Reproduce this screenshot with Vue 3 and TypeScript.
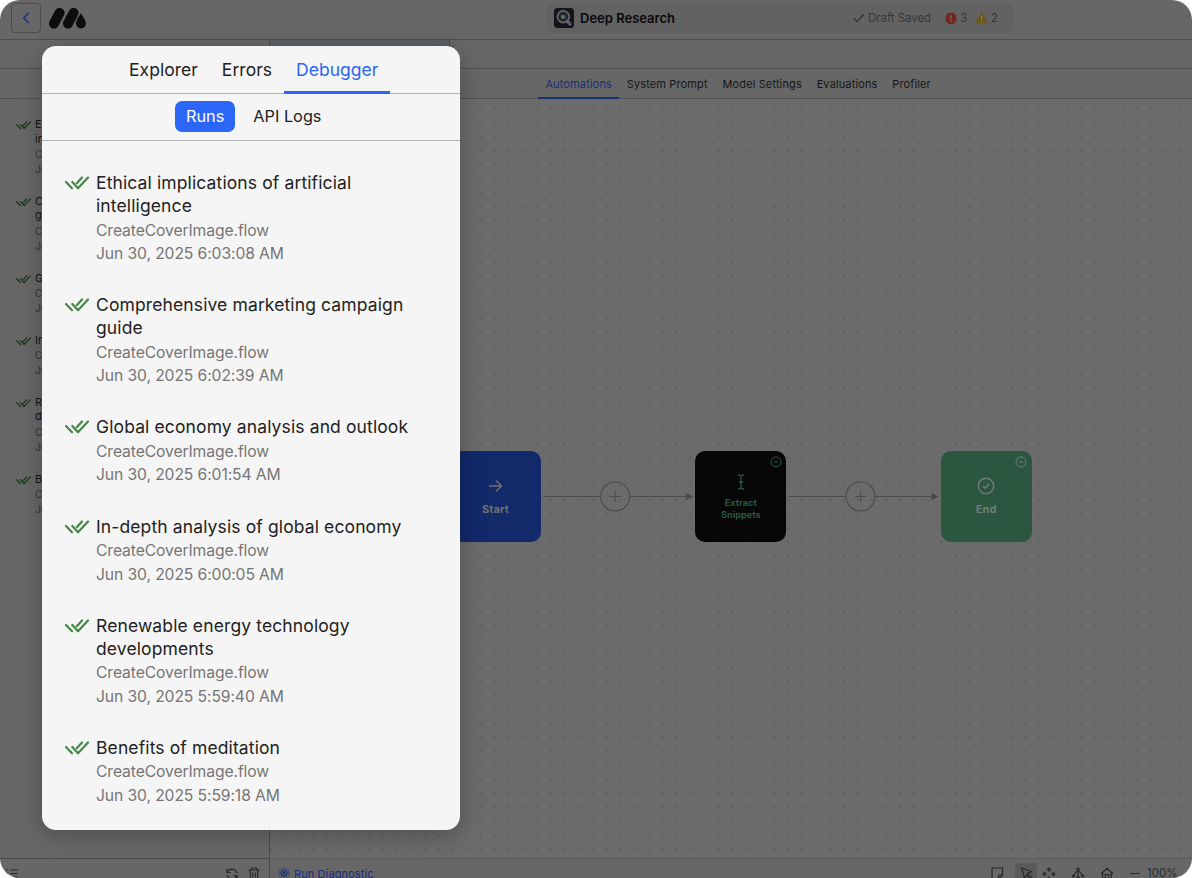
<script setup lang="ts">
interface Run { lines: string[]; time: string }

const runs: Run[] = [
  { lines: ['Ethical implications of artificial', 'intelligence'], time: '6:03:08' },
  { lines: ['Comprehensive marketing campaign', 'guide'], time: '6:02:39' },
  { lines: ['Global economy analysis and outlook'], time: '6:01:54' },
  { lines: ['In-depth analysis of global economy'], time: '6:00:05' },
  { lines: ['Renewable energy technology', 'developments'], time: '5:59:40' },
  { lines: ['Benefits of meditation'], time: '5:59:18' },
]
const tabs: string[] = ['Automations', 'System Prompt', 'Model Settings', 'Evaluations', 'Profiler']
</script>

<template>
  <div class="window">
    <header class="topbar">
      <div class="back">
        <svg width="30" height="30" viewBox="0 0 30 30"><path d="M17.8 9.800 12.700 15l5.100 5.200" fill="none" stroke="#1b3280" stroke-width="1.5" /></svg>
      </div>
      <svg class="logo" width="40" height="24" viewBox="0 0 40 24">
        <path d="M5.900 17.600 11.600 6.800M19.900 17.600 25.600 6.800" stroke="#0d0d0d" stroke-width="10" stroke-linecap="round" />
        <path d="M32.900 7.200c1.500 2.800 5 6.500 5 10.400a4.900 4.900 0 0 1-9.900 0c0-3.800 3.300-7.500 4.900-10.400Z" fill="#0d0d0d" />
      </svg>
      <div class="project">
        <svg width="20" height="20" viewBox="0 0 20 20">
          <rect width="20" height="20" rx="3.500" fill="#151517" />
          <circle cx="9.300" cy="8.800" r="5.900" fill="#202827" stroke="#69657a" stroke-width="1.700" />
          <path d="M7 7.500 9 6.500l2.500 1.500-.4 2.500-2.600.8L7 9.500Z" fill="#49685f" />
          <circle cx="8.500" cy="9" r=".8" fill="#8b8c94" />
          <path d="m13.500 13.200 2.500 2.800" stroke="#69657a" stroke-width="3.200" stroke-linecap="round" />
          <path d="m14.700 14.900 1 1" stroke="#383456" stroke-width="1" />
        </svg>
        <strong>Deep Research</strong>
        <span class="saved">
          <svg width="12" height="10" viewBox="0 0 12 10"><path d="m1 5.300 3.100 3.100L10.800 1.500" fill="none" stroke="#303030" stroke-width="1.200" /></svg>
          Draft Saved
        </span>
        <span class="count errors">
          <svg width="12" height="13" viewBox="0 0 12 13"><path d="m3.600.8 4.800 0 3 3v5.200l-3 3H3.600l-3-3V3.800Z" fill="#702820" /><path d="M6 3.300v3.700M6 8.600v1.200" stroke="#777" stroke-width="1.200" /></svg>
          3
        </span>
        <span class="count">
          <svg width="13" height="12" viewBox="0 0 13 12"><path d="M6.500 1.300 11.700 10.600H1.300Z" fill="#6d5718" stroke="#6d5718" stroke-width="1.400" stroke-linejoin="round" /><path d="M6.500 4v3.300M6.500 8.500v1.200" stroke="#888" stroke-width="1.100" /></svg>
          2
        </span>
      </div>
    </header>

    <div class="workspace">
      <aside class="sidebar">
        <div class="side-row"></div>
        <div class="side-row second"></div>
        <div class="run-list small">
          <article v-for="run in runs" :key="run.time" class="run">
            <svg class="check" viewBox="0 0 24 15"><path d="m1 7 6 6.200M7.300 7l5.700 6.200L23 2.500M11.800 8.200 17 2.500" fill="none" stroke="currentColor" stroke-width="2.200" stroke-linecap="round" stroke-linejoin="round" /></svg>
            <div>
              <h3><span v-for="line in run.lines" :key="line">{{ line }}</span></h3>
              <p>CreateCoverImage.flow</p>
              <p class="date">Jun 30, 2025 {{ run.time }} AM</p>
            </div>
          </article>
        </div>
        <footer class="side-footer">
          <svg class="list-icon" width="13" height="10" viewBox="0 0 13 10"><path d="M4 1h8M4 4.500h8M4 8h8M0 1h2M0 4.500h2M0 8h2" stroke="#292929" stroke-width="1.200" /></svg>
          <svg class="refresh" width="14" height="14" viewBox="0 0 14 14"><path d="M2 2v3.500h3.500M2.300 5.200a5 5 0 0 1 9.500.9M12 12V8.500H8.500M11.700 8.800A5 5 0 0 1 2.200 7.900" fill="none" stroke="#292929" stroke-width="1.100" /></svg>
          <svg width="12" height="14" viewBox="0 0 12 14"><path d="M.5 3h11M3.500 3V1h5v2M2 3l.6 9.500h6.800L10 3M4.700 5.500v5M7.300 5.500v5" fill="none" stroke="#292929" stroke-width="1.100" /></svg>
        </footer>
      </aside>

      <main class="main">
        <div class="file-row"><div class="file-tab"></div></div>
        <nav class="main-tabs">
          <span v-for="(tab, i) in tabs" :key="tab" :class="{ active: i === 0 }">{{ tab }}</span>
        </nav>
        <section class="canvas">
          <svg class="links" width="922" height="760" viewBox="270 99 922 760">
            <g stroke="#4b4b4b" stroke-width="1.100" fill="none">
              <path d="M543 496.500h57.500M630 496.500h58M788.500 496.500H846M875 496.500h58" />
              <circle cx="615.200" cy="496.500" r="14.500" /><circle cx="860.500" cy="496.500" r="14.500" />
              <path d="M609.700 496.500h11M615.200 491v11M855 496.500h11M860.500 491v11" />
            </g>
            <path d="m685.300 492.700 8 3.800-8 3.800 1.500-3.800ZM930.700 492.700l8 3.800-8 3.800 1.500-3.800Z" fill="#484848" />
          </svg>
          <div class="node start">
            <svg width="16" height="14" viewBox="0 0 16 14"><path d="M1 7h12.500M8 1.500 13.500 7 8 12.500" fill="none" stroke="currentColor" stroke-width="1.500" /></svg>
            <b>Start</b>
          </div>
          <div class="node extract">
            <svg class="minus" width="12" height="12" viewBox="0 0 12 12"><circle cx="6" cy="6" r="5" /><path d="M4 6h4" /></svg>
            <svg width="8" height="16" viewBox="0 0 8 16"><path d="M1 1h1l2 1 2-1h1M4 2v12M1 15h1l2-1 2 1h1M2 8h4" fill="none" stroke="currentColor" stroke-width="1.300" /></svg>
            <b>Extract<br>Snippets</b>
          </div>
          <div class="node end">
            <svg class="minus" width="12" height="12" viewBox="0 0 12 12"><circle cx="6" cy="6" r="5" /><path d="M4 6h4" /></svg>
            <svg width="18" height="18" viewBox="0 0 18 18"><g fill="none" stroke="currentColor" stroke-width="1.400"><circle cx="9" cy="9" r="7.700" /><path d="m6 9 2.300 2.200L12.200 7" /></g></svg>
            <b>End</b>
          </div>
        </section>
        <footer class="toolbar">
          <svg class="diag-icon" width="12" height="12" viewBox="0 0 12 12"><g fill="none" stroke="#172f77"><circle cx="6" cy="6" r="5.200" stroke-dasharray="1 1.040" /><circle cx="6" cy="6" r="3" stroke-width="1.100" /></g><circle cx="6" cy="6" r="1.400" fill="#172f77" /></svg>
          <span class="diag">Run Diagnostic</span>
          <div class="tools">
            <span class="tool note"><svg width="13" height="13" viewBox="0 0 13 13"><path d="M1 1h10.500v7L8 11.500H1ZM7.500 12V8h4" /></svg></span>
            <span class="tool pointer"><svg width="13" height="13" viewBox="0 0 13 13"><path d="m1.500 1 10 3.800-4 1.700 4 4-1.200 1.200-4-4-1.600 4Z" /></svg></span>
            <span class="tool move"><svg width="14" height="14" viewBox="0 0 14 14"><path d="M7 5V1.500M5 3.200l2-2 2 2M7 9v3.500M5 10.800l2 2 2-2M5 7H1.500M3.200 5l-2 2 2 2M9 7h3.500M10.800 5l2 2-2 2" /></svg></span>
            <span class="tool layout"><svg width="14" height="13" viewBox="0 0 14 13"><path d="M7 3v8M6.300 3.500 2.500 8.500M7.700 3.500l3.800 5" /><circle cx="7" cy="2" r="1" /><circle cx="2.300" cy="9" r="1" /><circle cx="7" cy="10.500" r="1" /><circle cx="11.700" cy="9" r="1" /></svg></span>
            <span class="tool home"><svg width="14" height="13" viewBox="0 0 14 13"><path d="m1 6.700 6-5.500 6 5.500M2.700 5.500V12h8.600V5.500M5.300 12V7.500h3.400V12" /></svg></span>
            <span class="zoom-minus"></span>
            <span class="zoom">100%</span>
          </div>
        </footer>
      </main>
    </div>

    <section class="panel">
      <nav class="panel-tabs"><span>Explorer</span><span>Errors</span><span class="active">Debugger</span></nav>
      <nav class="subtabs"><span class="active">Runs</span><span>API Logs</span></nav>
      <div class="run-list">
        <article v-for="run in runs" :key="run.time" class="run">
          <svg class="check" viewBox="0 0 24 15"><path d="m1 7 6 6.200M7.300 7l5.700 6.200L23 2.500M11.800 8.200 17 2.500" fill="none" stroke="currentColor" stroke-width="2.200" stroke-linecap="round" stroke-linejoin="round" /></svg>
          <div>
            <h3><span v-for="line in run.lines" :key="line">{{ line }}</span></h3>
            <p>CreateCoverImage.flow</p>
            <p class="date">Jun 30, 2025 {{ run.time }} AM</p>
          </div>
        </article>
      </div>
    </section>
  </div>
</template>

<style>
html, body { margin: 0; background: #fff; overflow: hidden; }
</style>

<style scoped>
* { box-sizing: border-box; }
.window { position: relative; width: 1192px; height: 878px; display: flex; flex-direction: column; overflow: hidden; border-radius: 20px; background: #676767; color: #151515; font-family: Inter, sans-serif; font-size: 11px; }
svg { display: block; flex: none; }
.topbar { height: 40px; flex: none; display: flex; align-items: flex-start; border-bottom: 1px solid #4e4e4e; padding-left: 11px; }
.back { width: 30px; height: 30px; border: 1px solid #4c4c4c; border-radius: 4px; margin-top: 3px; }
.back svg { margin: -1px; }
.logo { margin: 6px 0 0 7px; overflow: visible; }
.project { width: 466px; height: 30px; margin: 3px 0 0 459px; display: flex; align-items: center; background: #626262; border-radius: 8px; padding-left: 7px; }
.project strong { width: 273px; margin-left: 6px; font-size: 13px; font-weight: 600; letter-spacing: 0; color: #080808; }
.saved, .count { display: flex; align-items: center; font-size: 11.500px; color: #373737; white-space: nowrap; }
.saved { gap: 3px; width: 92px; letter-spacing: -.05px; }
.count { gap: 3px; width: 30px; }
.workspace { flex: 1; min-height: 0; display: flex; }
.sidebar { width: 270px; flex: none; border-right: 1px solid #4b4b4b; display: flex; flex-direction: column; }
.side-row { height: 29px; flex: none; border-bottom: 1px solid #505050; }
.side-row.second { height: 30px; }
.side-footer { height: 20px; flex: none; border-top: 1px solid #494949; display: flex; align-items: flex-start; padding: 8px 0 0 6px; }
.list-icon { margin-top: 2px; }
.refresh { margin: 0 9px 0 206px; }
.main { flex: 1; min-width: 0; display: flex; flex-direction: column; }
.file-row { height: 29px; border-bottom: 1px solid #505050; flex: none; }
.file-tab { width: 180px; height: 28px; background: #5c6065; border-right: 1px solid #4b4b4b; }
.main-tabs { height: 30px; flex: none; display: flex; padding-left: 268px; border-bottom: 1px solid #505050; }
.main-tabs span { height: 30px; padding: 0 7.400px; line-height: 30px; font-size: 11px; letter-spacing: .13px; }
.main-tabs .active { color: #172f77; border-bottom: 2px solid #172f77; }
.canvas { flex: 1; min-height: 0; position: relative; background-color: #6b6b6b; background-image: radial-gradient(circle, #5e5e5e 0 .7px, transparent 1.200px); background-size: 13.970px 13.970px; background-position: 8.200px 2.800px; }
.links { position: absolute; left: 0; top: 0; }
.node { position: absolute; top: 352px; width: 91px; height: 91px; border-radius: 10px; display: flex; flex-direction: column; align-items: center; font-size: 11px; }
.node b { font-weight: 700; text-align: center; letter-spacing: .1px; }
.start { left: 180px; background: #12296a; color: #717171; padding-top: 28px; gap: 8.500px; }
.extract { left: 425.300px; background: #070707; color: #285a41; padding-top: 23px; gap: 7px; }
.extract b { font-size: 9px; line-height: 12px; }
.end { left: 670.700px; background: #2b563f; color: #747c76; padding-top: 26px; gap: 7px; }
.minus { position: absolute; top: 5px; right: 4.500px; fill: none; stroke: currentColor; stroke-width: 1; }
.toolbar { height: 20px; flex: none; border-top: 1px solid #5c5c5c; display: flex; align-items: flex-start; padding-left: 8px; }
.diag-icon { margin-top: 8px; }
.diag { margin: 7.500px 0 0 4px; font-size: 11px; line-height: 14px; letter-spacing: .1px; color: #172f77; }
.tools { margin-left: auto; display: flex; align-items: flex-start; }
.tool { height: 20px; padding-top: 8px; }
.tool svg { fill: none; stroke: #282828; stroke-width: 1.200; }
.note { width: 24px; }
.pointer { width: 22px; height: 16px; background: #5a5a5a; border-radius: 3px 3px 0 0; margin-top: 4px; padding: 4px 0 0 5px; }
.move { width: 34px; padding-left: 5px; }
.layout { width: 29px; }
.home { width: 30px; }
.zoom-minus { width: 10px; height: 1px; background: #292929; margin-top: 14px; }
.zoom { width: 45px; margin: 7px 0 0 7px; font-size: 11.500px; line-height: 15px; color: #303030; }

.panel { position: absolute; left: 42px; top: 46px; width: 418px; height: 784px; border-radius: 14px; background: #f5f5f5; color: #222; box-shadow: 0 5px 25px rgba(0,0,0,.25); overflow: hidden; }
.panel-tabs { height: 48px; display: flex; padding-left: 75px; border-bottom: 1.500px solid #b4b4b4; font-size: 17.500px; line-height: 48px; letter-spacing: .03px; }
.panel-tabs span { height: 48px; padding: 0 12px; }
.panel-tabs .active { color: #2b66f6; border-bottom: 3px solid #2b66f6; }
.subtabs { height: 47px; display: flex; align-items: center; padding: 0 0 1px 133px; gap: 7px; border-bottom: 1.500px solid #b4b4b4; font-size: 16.300px; }
.subtabs span { height: 31px; line-height: 31px; padding: 0 11px; border-radius: 7px; }
.subtabs .active { background: #2b66f6; color: #fff; }
.run-list { padding: 30px 0 0 23px; }
.run { display: flex; gap: 7px; margin-bottom: 28.200px; white-space: nowrap; }
.check { width: 24px; height: 15px; margin-top: 4px; color: #458747; }
.run h3 { margin: 0; font-size: 17.500px; line-height: 23px; font-weight: 400; letter-spacing: .12px; }
.run h3 span { display: block; }
.run p { margin: 1.600px 0 0; font-size: 15.700px; line-height: 23px; color: #757575; letter-spacing: -.11px; }
.run .date { margin-top: .4px; }
.small { flex: 1; min-height: 0; overflow: hidden; padding: 18px 0 0 15.500px; }
.small .run { gap: 4.500px; margin-bottom: 17px; }
.small .check { width: 15px; height: 10px; margin-top: 3px; color: #1c3b1d; }
.small h3 { font-size: 11px; line-height: 14.600px; letter-spacing: .1px; }
.small p { margin-top: 1px; font-size: 10px; line-height: 14.600px; color: #363636; }
</style>
